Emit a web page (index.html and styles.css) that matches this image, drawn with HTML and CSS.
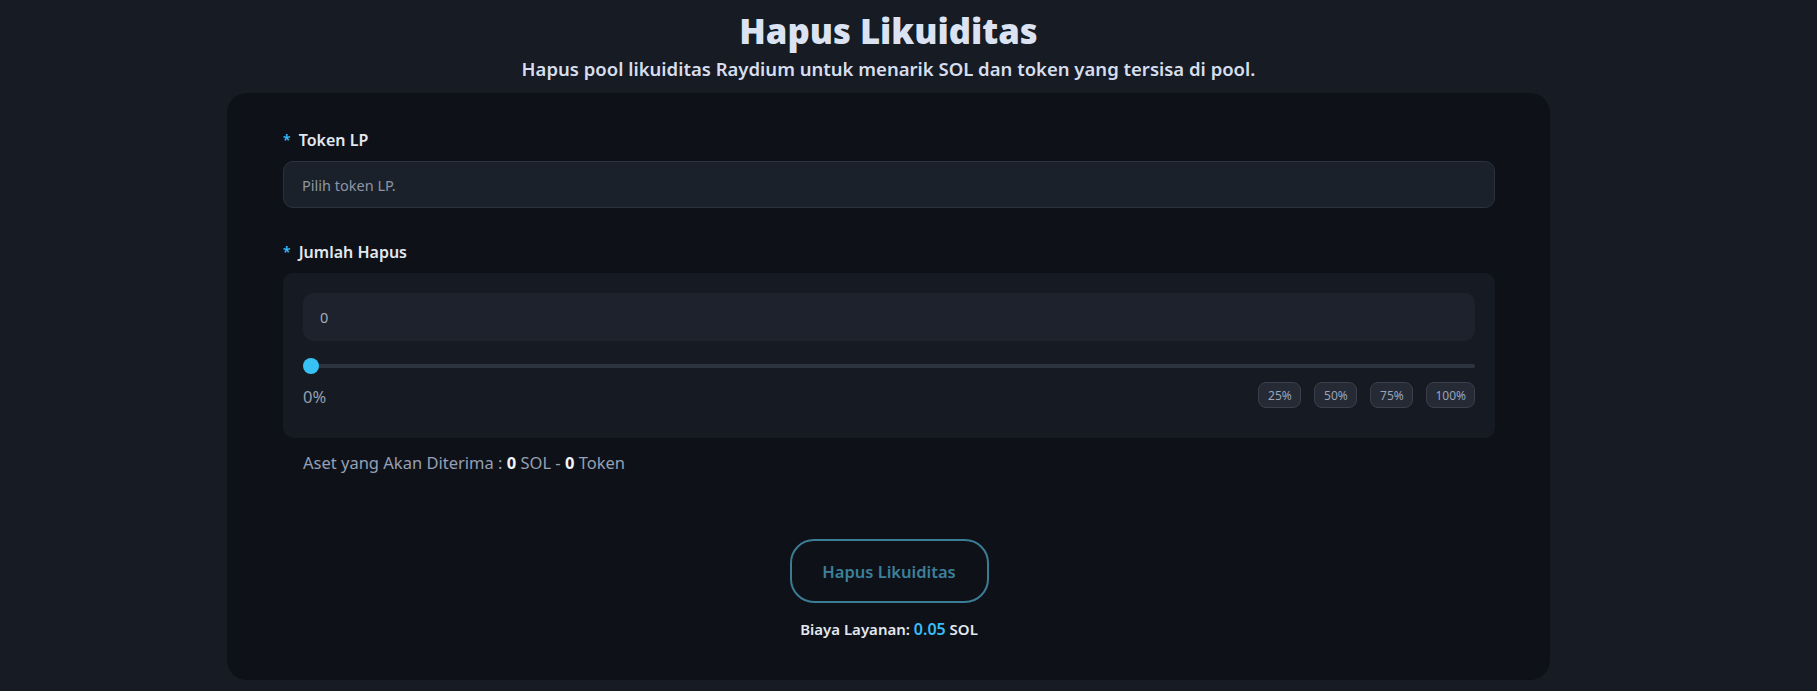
FILE: index.html
```html
<!DOCTYPE html>
<html lang="id">
<head>
<meta charset="utf-8">
<title>Hapus Likuiditas</title>
<link rel="stylesheet" href="styles.css">
</head>
<body>
<div class="page">
  <header class="head">
    <h1 class="title">Hapus Likuiditas</h1>
    <p class="subtitle">Hapus pool likuiditas Raydium untuk menarik SOL dan token yang tersisa di pool.</p>
  </header>
  <main class="card">
    <div class="field">
      <label class="label"><span class="req">*</span>Token LP</label>
      <div class="select">Pilih token LP.</div>
    </div>
    <div class="field field-amount">
      <label class="label"><span class="req">*</span>Jumlah Hapus</label>
      <div class="amount-box">
        <div class="amount-input">0</div>
        <input class="range" type="range" min="0" max="100" value="0">
        <div class="range-row">
          <span class="pct">0%</span>
          <div class="chips">
            <button class="chip">25%</button>
            <button class="chip">50%</button>
            <button class="chip">75%</button>
            <button class="chip">100%</button>
          </div>
        </div>
      </div>
      <p class="receive">Aset yang Akan Diterima : <b>0</b> SOL - <b>0</b> Token</p>
    </div>
    <div class="actions">
      <button class="submit">Hapus Likuiditas</button>
      <p class="fee">Biaya Layanan: <span class="fee-val">0.05</span> SOL</p>
    </div>
  </main>
</div>
</body>
</html>
```
FILE: styles.css
```css
* { box-sizing: border-box; }
html, body { margin: 0; background: #161b24; }
body {
  font-family: "Noto Sans", "Open Sans", sans-serif;
  color: #e2e8f0;
  height: 691px;
  overflow: hidden;
}
.page {
  padding: 0 267px 0 227px;
}
.head {
  text-align: center;
  padding-top: 11px;
}
.title {
  margin: 0;
  font-size: 34.7px;
  line-height: 40px;
  font-weight: 900;
  color: #dbe3f3;
}
.subtitle {
  margin: 5px 0 0;
  font-size: 18.5px;
  line-height: 26px;
  font-weight: 600;
  color: #d6deed;
}
.card {
  margin-top: 11px;
  background: #0f1118;
  border-radius: 20px;
  padding: 35px 55px 41px 56px;
}
.field { display: flex; flex-direction: column; gap: 9px; }
.field-amount { margin-top: 32px; gap: 9px; }
.label {
  font-size: 16px;
  line-height: 24px;
  font-weight: 600;
  color: #e2e8f0;
  display: flex;
  align-items: center;
}
.req {
  color: #38bdf8;
  margin-right: 8px;
  font-size: 14px;
}
.select {
  height: 47px;
  display: flex;
  align-items: center;
  padding: 0 18px;
  background: #1b212a;
  border: 1px solid #2c323d;
  border-radius: 10px;
  font-size: 14.5px;
  color: #8d95a5;
}
.amount-box {
  background: #161a22;
  border-radius: 10px;
  padding: 20px 20px 30px;
  display: flex;
  flex-direction: column;
}
.amount-input {
  height: 48px;
  background: #1d222c;
  border-radius: 10px;
  padding: 0 17px;
  display: flex;
  align-items: center;
  font-size: 14.5px;
  color: #a6aebd;
}
.range {
  -webkit-appearance: none;
  appearance: none;
  width: 100%;
  margin: 17px 0 0;
  height: 16px;
  background: transparent;
}
.range::-webkit-slider-runnable-track {
  height: 4px;
  background: #2e3340;
  border-radius: 2px;
}
.range::-webkit-slider-thumb {
  -webkit-appearance: none;
  appearance: none;
  width: 16px;
  height: 16px;
  border-radius: 50%;
  background: #38c1f5;
  margin-top: -6px;
  border: none;
}
.range-row {
  margin-top: 8px;
  display: flex;
  justify-content: space-between;
  align-items: center;
}
.pct {
  font-size: 16.5px;
  color: #94a0b4;
  margin-top: 3px;
}
.chips { display: flex; gap: 13px; }
.chip {
  height: 26px;
  min-width: 43px;
  padding: 0 8px;
  background: #252a35;
  border: 1px solid #3a3f4b;
  border-radius: 8px;
  color: #9aa4ba;
  font-family: inherit;
  font-size: 12px;
}
.receive {
  margin: 4px 0 0;
  padding-left: 20px;
  font-size: 16.5px;
  line-height: 24px;
  color: #94a0b4;
}
.receive b { color: #f1f5f9; font-weight: 700; }
.actions {
  margin-top: 64px;
  display: flex;
  flex-direction: column;
  align-items: center;
}
.submit {
  width: 199px;
  height: 64px;
  background: transparent;
  border: 2px solid #3a7d94;
  border-radius: 24px;
  color: #3c8099;
  font-family: inherit;
  font-size: 16.5px;
  font-weight: 600;
}
.fee {
  margin: 16px 0 0;
  font-size: 15px;
  line-height: 20px;
  font-weight: 600;
  color: #e2e8f0;
}
.fee-val { color: #38bdf8; font-size: 16px; }
```
